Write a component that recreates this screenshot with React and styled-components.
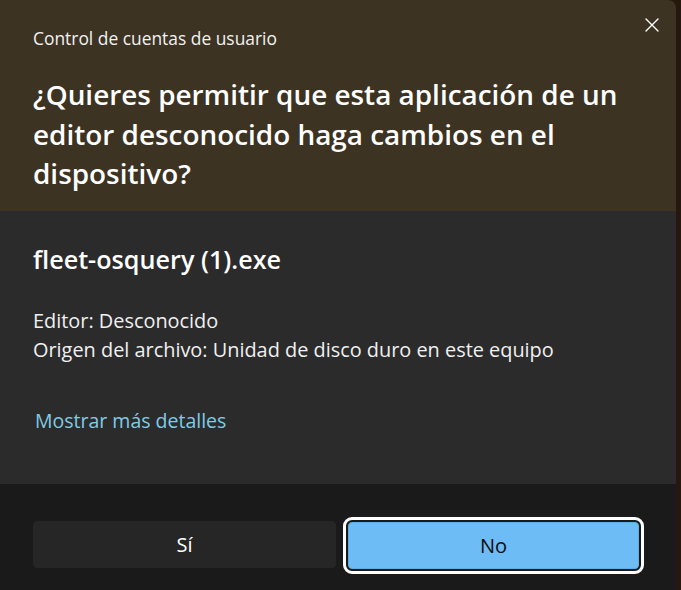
import React from "react";
import styled, { createGlobalStyle } from "styled-components";

const Global = createGlobalStyle`
  html, body { margin: 0; padding: 0; }
  body {
    background: #26170f;
    font-family: "Open Sans", "Noto Sans", sans-serif;
    -webkit-font-smoothing: antialiased;
  }
`;

const Screen = styled.div`
  width: 681px;
  height: 590px;
  overflow: hidden;
  display: flex;
`;

const Dialog = styled.div`
  width: 676px;
  height: 590px;
  display: flex;
  flex-direction: column;
  border-top-right-radius: 8px;
  overflow: hidden;
`;

const Header = styled.header`
  position: relative;
  height: 211px;
  box-sizing: border-box;
  background: #3c3322;
  padding: 27px 40px 0 33px;
  color: #fff;
`;

const AppTitle = styled.div`
  font-size: 17.4px;
  line-height: 22px;
  color: #f2f2f2;
`;

const Question = styled.h1`
  margin: 26px 0 0;
  font-size: 27.9px;
  font-weight: 600;
  line-height: 39.5px;
  color: #fff;
`;

const CloseButton = styled.button`
  position: absolute;
  top: 15px;
  right: 14px;
  width: 20px;
  height: 20px;
  padding: 0;
  border: none;
  background: transparent;
  display: flex;
  align-items: center;
  justify-content: center;
  cursor: pointer;
`;

const Body = styled.section`
  flex: 0 0 273px;
  box-sizing: border-box;
  background: #2b2b2b;
  padding: 33px 40px 0 33px;
  color: #fff;
`;

const FileName = styled.div`
  font-size: 25.2px;
  font-weight: 600;
  line-height: 30px;
`;

const Details = styled.div`
  margin-top: 32px;
  font-size: 19.9px;
  line-height: 29px;
  color: #f0f0f0;
`;

const MoreLink = styled.a`
  display: inline-block;
  margin: 44.5px 0 0 2px;
  font-size: 19.5px;
  line-height: 24px;
  color: #80cbe6;
  text-decoration: none;
  cursor: pointer;
`;

const Footer = styled.footer`
  flex: 1;
  background: #1a1a1a;
  display: grid;
  grid-template-columns: 303px 291px;
  column-gap: 12px;
  padding: 37px 0 0 33px;
  box-sizing: border-box;
  align-content: start;
  align-items: start;
`;

const Button = styled.button`
  height: 47px;
  border-radius: 4px;
  font-family: inherit;
  font-size: 20px;
  cursor: pointer;
  border: 1px solid ${(p) => (p.$primary ? "#5aaee6" : "#262626")};
  background: ${(p) => (p.$primary ? "#6dbcf5" : "#262626")};
  color: ${(p) => (p.$primary ? "#0a0a0a" : "#fff")};
  margin-top: ${(p) => (p.$primary ? "1px" : "0")};
  outline: ${(p) => (p.$primary ? "3px solid #fff" : "none")};
  outline-offset: 2px;
`;

export default function App() {
  return (
    <>
      <Global />
      <Screen>
        <Dialog>
          <Header>
            <AppTitle>Control de cuentas de usuario</AppTitle>
            <Question>
              ¿Quieres permitir que esta aplicación de un editor desconocido
              haga cambios en el dispositivo?
            </Question>
            <CloseButton aria-label="Cerrar">
              <svg width="14" height="14" viewBox="0 0 14 14">
                <path
                  d="M1 1 L13 13 M13 1 L1 13"
                  stroke="#fff"
                  strokeWidth="1.4"
                  strokeLinecap="round"
                />
              </svg>
            </CloseButton>
          </Header>
          <Body>
            <FileName>fleet-osquery (1).exe</FileName>
            <Details>
              <div>Editor: Desconocido</div>
              <div>Origen del archivo: Unidad de disco duro en este equipo</div>
            </Details>
            <MoreLink>Mostrar más detalles</MoreLink>
          </Body>
          <Footer>
            <Button>Sí</Button>
            <Button $primary>No</Button>
          </Footer>
        </Dialog>
      </Screen>
    </>
  );
}
